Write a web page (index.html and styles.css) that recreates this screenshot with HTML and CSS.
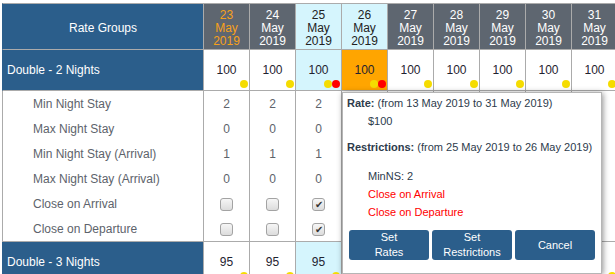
FILE: index.html
```html
<!DOCTYPE html>
<html>
<head>
<meta charset="utf-8">
<link rel="stylesheet" href="styles.css">
</head>
<body>
<div class="wrap">
<table class="grid">
<thead>
<tr>
<th class="name-h">Rate Groups</th>
<th class="day today">23<br>May<br>2019</th>
<th class="day">24<br>May<br>2019</th>
<th class="day hl">25<br>May<br>2019</th>
<th class="day hl">26<br>May<br>2019</th>
<th class="day">27<br>May<br>2019</th>
<th class="day">28<br>May<br>2019</th>
<th class="day">29<br>May<br>2019</th>
<th class="day">30<br>May<br>2019</th>
<th class="day">31<br>May<br>2019</th>
</tr>
</thead>
<tbody>
<tr class="group">
<td class="name">Double - 2 Nights</td>
<td class="val">100<span class="dots"><i class="dot y"></i></span></td>
<td class="val">100<span class="dots"><i class="dot y"></i></span></td>
<td class="val hl">100<span class="dots"><i class="dot y"></i><i class="dot r"></i></span></td>
<td class="val sel">100<span class="dots"><i class="dot y"></i><i class="dot r"></i></span></td>
<td class="val">100<span class="dots"><i class="dot y"></i></span></td>
<td class="val">100<span class="dots"><i class="dot y"></i></span></td>
<td class="val">100<span class="dots"><i class="dot y"></i></span></td>
<td class="val">100<span class="dots"><i class="dot y"></i></span></td>
<td class="val">100<span class="dots"><i class="dot y"></i></span></td>
</tr>
<tr class="sub">
<td class="label">Min Night Stay</td>
<td>2</td><td>2</td><td>2</td><td></td><td></td><td></td><td></td><td></td><td></td>
</tr>
<tr class="sub">
<td class="label">Max Night Stay</td>
<td>0</td><td>0</td><td>0</td><td></td><td></td><td></td><td></td><td></td><td></td>
</tr>
<tr class="sub">
<td class="label">Min Night Stay (Arrival)</td>
<td>1</td><td>1</td><td>1</td><td></td><td></td><td></td><td></td><td></td><td></td>
</tr>
<tr class="sub">
<td class="label">Max Night Stay (Arrival)</td>
<td>0</td><td>0</td><td>0</td><td></td><td></td><td></td><td></td><td></td><td></td>
</tr>
<tr class="sub">
<td class="label">Close on Arrival</td>
<td><span class="cb"></span></td><td><span class="cb"></span></td><td><span class="cb on">✔</span></td><td></td><td></td><td></td><td></td><td></td><td></td>
</tr>
<tr class="sub last">
<td class="label">Close on Departure</td>
<td><span class="cb"></span></td><td><span class="cb"></span></td><td><span class="cb on">✔</span></td><td></td><td></td><td></td><td></td><td></td><td></td>
</tr>
<tr class="group">
<td class="name">Double - 3 Nights</td>
<td class="val">95<span class="dots"><i class="dot y"></i></span></td>
<td class="val">95<span class="dots"><i class="dot y"></i></span></td>
<td class="val hl">95<span class="dots"><i class="dot y"></i></span></td>
<td class="val"></td>
<td class="val"></td>
<td class="val"></td>
<td class="val"></td>
<td class="val"></td>
<td class="val"><span class="dots"><i class="dot y"></i></span></td>
</tr>
</tbody>
</table>
</div>

<div class="popup">
<p class="line"><b>Rate:</b> (from 13 May 2019 to 31 May 2019)</p>
<p class="line ind">$100</p>
<p class="line gap1"><b>Restrictions:</b> (from 25 May 2019 to 26 May 2019)</p>
<p class="line ind gap2">MinNS: 2</p>
<p class="line ind red">Close on Arrival</p>
<p class="line ind red">Close on Departure</p>
<div class="actions">
<button class="btn">Set<br>Rates</button>
<button class="btn">Set<br>Restrictions</button>
<button class="btn">Cancel</button>
</div>
</div>
</body>
</html>
```
FILE: styles.css
```css
html, body {
  margin: 0;
  padding: 0;
  background: #ffffff;
  overflow: hidden;
}
body {
  position: relative;
  width: 615px;
  height: 274px;
  font-family: "Liberation Sans", Arial, sans-serif;
  font-size: 12px;
}
.wrap {
  margin: 3px 0 0 2px;
  width: 613px;
  overflow: hidden;
}
.grid {
  border-collapse: separate;
  border-spacing: 0;
  table-layout: fixed;
  width: 616px;
}
.grid th, .grid td {
  box-sizing: border-box;
  padding: 0;
  border-right: 1px solid #ababab;
  text-align: center;
  vertical-align: middle;
  font-weight: normal;
}
.grid th {
  height: 47px;
  border-top: 1px solid #ababab;
  border-bottom: 1px solid #ababab;
  padding-top: 3px;
  line-height: 13px;
}
.grid th.name-h {
  width: 202px;
  border-left: 1px solid #2b5e8b;
  background: #2b5e8b;
  color: #ffffff;
}
.grid th.day {
  width: 46px;
  background: #5e6670;
  color: #ffffff;
}
.grid th.day.today {
  color: #f7a11a;
}
.grid th.day.hl {
  background: #d5f5fd;
  color: #222222;
}
.group td {
  height: 41px;
  border-bottom: 1px solid #ababab;
  position: relative;
  color: #1f2330;
}
.group td.name {
  text-align: left;
  padding-left: 4px;
  background: #2b5e8b;
  color: #ffffff;
  border-left: 1px solid #2b5e8b;
}
.group td.hl {
  background: #d5f5fd;
}
.group td.sel {
  background: #ffa500;
}
.dots {
  position: absolute;
  right: 1px;
  bottom: 2px;
  display: flex;
}
.dot {
  display: block;
  width: 8px;
  height: 8px;
  border-radius: 50%;
}
.dot.y {
  background: #f5dc00;
}
.dot.r {
  background: #ff0000;
}
.sub td {
  height: 25px;
  color: #5d636b;
}
.sub td.label {
  text-align: left;
  padding-left: 30px;
  border-left: 1px solid #ababab;
}
.sub.last td {
  height: 26px;
  border-bottom: 1px solid #ababab;
}
.cb {
  display: inline-block;
  box-sizing: border-box;
  width: 13px;
  height: 13px;
  border: 1px solid #a3a3a3;
  border-radius: 3px;
  background: linear-gradient(#f6f6f6, #dcdcdc);
  vertical-align: middle;
  font-size: 10px;
  line-height: 11px;
  color: #333333;
  text-align: center;
}
.popup {
  position: absolute;
  left: 342px;
  top: 92px;
  width: 260px;
  height: 182px;
  box-sizing: border-box;
  background: #ffffff;
  border: 1px solid #b5b5b5;
  box-shadow: 1px 1px 6px rgba(0, 0, 0, 0.45);
  padding: 1px 0 0 4px;
  font-size: 11px;
  color: #2d3b4c;
}
.line {
  margin: 0;
  line-height: 18px;
  white-space: nowrap;
}
.line b {
  font-weight: bold;
}
.ind {
  padding-left: 21px;
}
.gap1 {
  margin-top: 8px;
}
.gap2 {
  margin-top: 11px;
}
.red {
  color: #ff0000;
}
.actions {
  display: flex;
  gap: 3px;
  margin: 9px 0 0 2px;
}
.btn {
  width: 80px;
  height: 30px;
  padding: 0;
  border: 0;
  border-radius: 3px;
  background: #2b5e8b;
  color: #ffffff;
  font-family: "Liberation Sans", Arial, sans-serif;
  font-size: 11px;
  line-height: 15px;
}
```
